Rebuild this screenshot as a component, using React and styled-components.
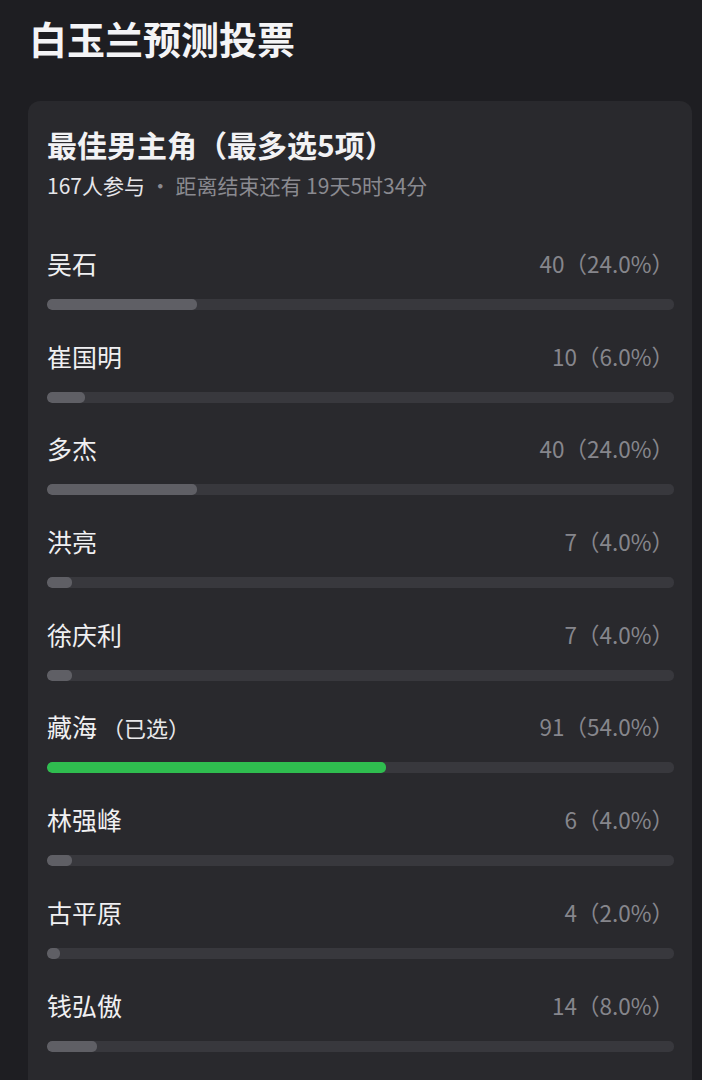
import React from "react";
import styled, { createGlobalStyle } from "styled-components";

const Global = createGlobalStyle`
  html, body { margin: 0; padding: 0; background: #1e1e22; }
  body { font-family: "Noto Sans CJK SC", "Noto Sans", sans-serif; }
  * { box-sizing: border-box; }
`;

const Page = styled.div`
  width: 702px;
  height: 1080px;
  overflow: hidden;
  background: #1e1e22;
  padding: 14px 10px 0 28px;
`;

const PageTitle = styled.h1`
  margin: 0 0 0 1px;
  font-size: 38px;
  line-height: 48px;
  font-weight: 700;
  color: #f4f4f6;
  letter-spacing: 0;
`;

const Card = styled.section`
  margin-top: 39px;
  background: #29292d;
  border-radius: 12px;
  padding: 24px 18px 40px 19px;
  min-height: 1100px;
`;

const CardTitle = styled.h2`
  margin: 0;
  font-size: 30px;
  line-height: 38px;
  font-weight: 700;
  color: #f2f2f4;
`;

const Meta = styled.div`
  margin-top: 9px;
  font-size: 21px;
  line-height: 26px;
  color: #8a8a90;
`;

const Count = styled.span`
  color: #e6e6ea;
`;

const List = styled.div`
  margin-top: 50px;
  display: flex;
  flex-direction: column;
  gap: 30.7px;
`;

const Row = styled.div`
  display: flex;
  flex-direction: column;
`;

const RowHead = styled.div`
  display: flex;
  justify-content: space-between;
  align-items: center;
  height: 30px;
`;

const Name = styled.span`
  font-size: 25px;
  color: #f0f0f2;
`;

const Tag = styled.span`
  font-size: 22px;
  color: #e8e8ea;
`;

const Value = styled.span`
  font-size: 22.5px;
  color: #86868c;
`;

const Track = styled.div`
  margin-top: 21px;
  height: 11px;
  border-radius: 5px;
  background: #38383d;
  overflow: hidden;
`;

const Fill = styled.div`
  height: 100%;
  border-radius: 5px;
  background: ${(p) => (p.$selected ? "#2fbd4f" : "#5f5f65")};
`;

const items = [
  { name: "吴石", count: 40, pct: 24.0 },
  { name: "崔国明", count: 10, pct: 6.0 },
  { name: "多杰", count: 40, pct: 24.0 },
  { name: "洪亮", count: 7, pct: 4.0 },
  { name: "徐庆利", count: 7, pct: 4.0 },
  { name: "藏海", count: 91, pct: 54.0, selected: true },
  { name: "林强峰", count: 6, pct: 4.0 },
  { name: "古平原", count: 4, pct: 2.0 },
  { name: "钱弘傲", count: 14, pct: 8.0 },
];

export default function App() {
  return (
    <>
      <Global />
      <Page>
        <PageTitle>白玉兰预测投票</PageTitle>
        <Card>
          <CardTitle>最佳男主角（最多选5项）</CardTitle>
          <Meta>
            <Count>167人参与</Count> · 距离结束还有 19天5时34分
          </Meta>
          <List>
            {items.map((it) => (
              <Row key={it.name}>
                <RowHead>
                  <Name>
                    {it.name}
                    {it.selected && <Tag> （已选）</Tag>}
                  </Name>
                  <Value>
                    {it.count}（{it.pct.toFixed(1)}%）
                  </Value>
                </RowHead>
                <Track>
                  <Fill $selected={it.selected} style={{ width: `${it.pct}%` }} />
                </Track>
              </Row>
            ))}
          </List>
        </Card>
      </Page>
    </>
  );
}
